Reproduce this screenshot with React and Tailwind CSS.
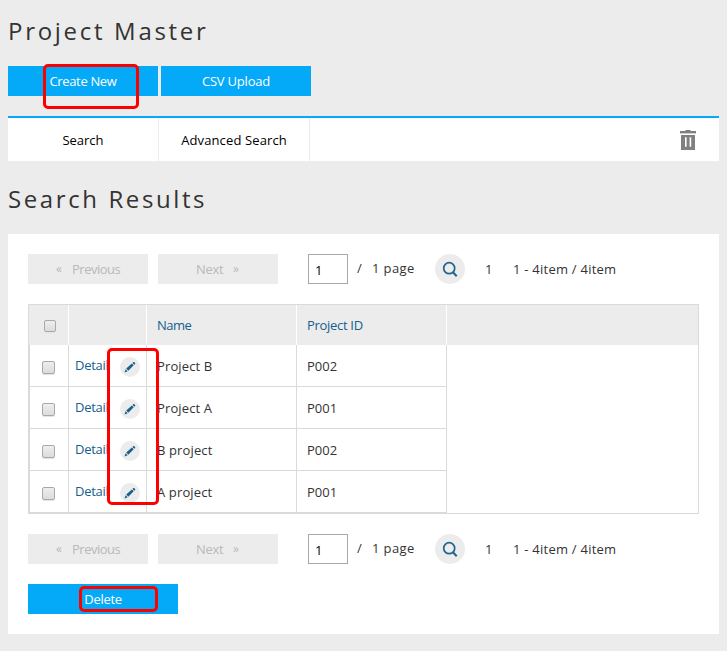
const rows = [
  ["Project B", "P002"],
  ["Project A", "P001"],
  ["B project", "P002"],
  ["A project", "P001"],
];

function Checkbox({ className = "" }) {
  return (
    <span
      className={`block rounded-[2px] border border-[#a9a9a9] bg-linear-to-b from-[#eeeeee] to-[#dcdcdc] shadow-[0_1px_0_#e4e4e4] ${className}`}
    />
  );
}

function Trash() {
  return (
    <svg className="block h-5 w-4" viewBox="0 0 16 20" fill="#808080">
      <path d="M5.5 0h5v1H16v2H0V1h5.5z" />
      <path d="M0 3h16v1H0z" fill="#cfcfcf" />
      <path d="M1 5h14v15H1zM5 7.3v9.4h1.6V7.3zM9.6 7.3v9.4h1.6V7.3z" fillRule="evenodd" />
    </svg>
  );
}

function Pencil() {
  return (
    <span className="flex size-5 items-center justify-center rounded-full bg-[#ececec]">
      <svg className="size-5" viewBox="0 0 20 20" fill="#15608c">
        <path d="M4.5 15.4l1.1-3.2 2.1 2.1zM6.2 11.6l5.7-5.1 1.8 1.8-5.4 5.5zM12.5 5.9l.9-.8q.5-.3 1 .1l.7.7q.4.5 0 1l-.8.9z" />
      </svg>
    </span>
  );
}

function Pager() {
  return (
    <div className="flex h-[30px] text-[13px] leading-[30px] text-[#333]">
      <div className="flex w-[120px] bg-[#ececec] pl-7 text-[#b9b9b9]">
        <span className="w-4 text-[12px]">«</span>
        <span className="tracking-[-0.5px]">Previous</span>
      </div>
      <div className="ml-[10px] flex w-[120px] bg-[#ececec] pl-[38px] text-[#b9b9b9]">
        <span className="w-[37px] tracking-[-0.3px]">Next</span>
        <span className="text-[12px]">»</span>
      </div>
      <div className="ml-[30px] w-10 border border-[#a9a9a9] bg-white pl-[6px] text-[13px] leading-[31px] text-black">1</div>
      <span className="ml-[9px] w-[15px] leading-[29px]">/</span>
      <span className="w-[63px] leading-[29px] tracking-[0.4px]">1 page</span>
      <span className="size-[30px] rounded-full bg-[#ececec]">
        <svg className="size-[30px]" viewBox="0 0 30 30" fill="none" stroke="#20648d" strokeWidth="1.7">
          <circle cx="14.2" cy="14.2" r="5.5" />
          <path d="M17.8 18l3.9 4.2" strokeWidth="2" />
        </svg>
      </span>
      <span className="ml-5 w-[28px]">1</span>
      <span className="whitespace-nowrap tracking-[0.24px]">1 - 4item / 4item</span>
    </div>
  );
}

export default function App() {
  return (
    <div className="relative h-[651px] w-[727px] overflow-hidden bg-[#ececec] px-2 font-['Open_Sans','Noto_Sans',sans-serif] text-[13px] text-[#333]">
      <h1 className="h-[66px] whitespace-nowrap pt-[13px] text-[24px] font-normal leading-9 tracking-[2.7px]">Project Master</h1>
      <div className="flex gap-[3px] text-center leading-[30px] text-white">
        <div className="h-[30px] w-[150px] bg-[#04a9f8] tracking-[-0.35px]">Create New</div>
        <div className="h-[30px] w-[150px] bg-[#04a9f8] tracking-[-0.2px]">CSV Upload</div>
      </div>
      <div className="mt-5 flex h-[45px] w-[711px] border-t-2 border-[#04a9f8] bg-white text-center leading-[44px] text-black">
        <div className="w-[151px] border-r border-[#ececec]">Search</div>
        <div className="w-[151px] border-r border-[#ececec] tracking-[0.12px]">Advanced Search</div>
        <div className="ml-auto mr-[23px] pt-3"><Trash /></div>
      </div>
      <h2 className="h-[73px] whitespace-nowrap pt-5 text-[24px] font-normal leading-9 tracking-[2.6px]">Search Results</h2>

      <div className="h-[400px] w-[711px] bg-white p-5">
        <Pager />
        <div className="my-5 h-[210px] w-[671px] border border-[#dadada]">
          <div className="flex h-10 bg-[#ececec] leading-[41px] text-[#15608c]">
            <div className="w-10 border-r border-white pl-[15px] pt-[15px]"><Checkbox className="size-3" /></div>
            <div className="w-[78px] border-r border-white" />
            <div className="w-[150px] border-r border-white pl-[10px] tracking-[-0.5px]">Name</div>
            <div className="w-[150px] border-r border-white pl-[10px] tracking-[-0.3px]">Project ID</div>
          </div>
          <div className="w-[418px] border-l border-[#dadada]">
            {rows.map(([name, id]) => (
              <div key={name} className="flex h-[42px] border-b border-[#dadada] leading-[42px]">
                <div className="w-[39px] border-r border-[#dadada] pl-3 pt-4"><Checkbox className="size-[13px]" /></div>
                <div className="flex w-[78px] border-r border-[#dadada] pl-[6px] text-[#15608c]">
                  <span className="w-[45px] leading-[41px] tracking-[-0.25px]">Detail</span>
                  <span className="pt-3"><Pencil /></span>
                </div>
                <div className="w-[150px] border-r border-[#dadada] pl-[10px] tracking-[0.13px]">{name}</div>
                <div className="w-[150px] border-r border-[#dadada] pl-[10px]">{id}</div>
              </div>
            ))}
          </div>
        </div>
        <Pager />
        <div className="mt-5 h-[30px] w-[150px] bg-[#04a9f8] text-center leading-[30px] tracking-[-0.3px] text-white">Delete</div>
      </div>

      <div className="absolute left-[43px] top-[64px] h-[45px] w-[96px] rounded-[5px] border-3 border-[#fe0000]" />
      <div className="absolute left-[107px] top-[348px] h-[157px] w-[52px] rounded-[5px] border-3 border-[#fe0000]" />
      <div className="absolute left-[79px] top-[586px] h-[26px] w-[79px] rounded-[5px] border-3 border-[#fe0000]" />
    </div>
  );
}
